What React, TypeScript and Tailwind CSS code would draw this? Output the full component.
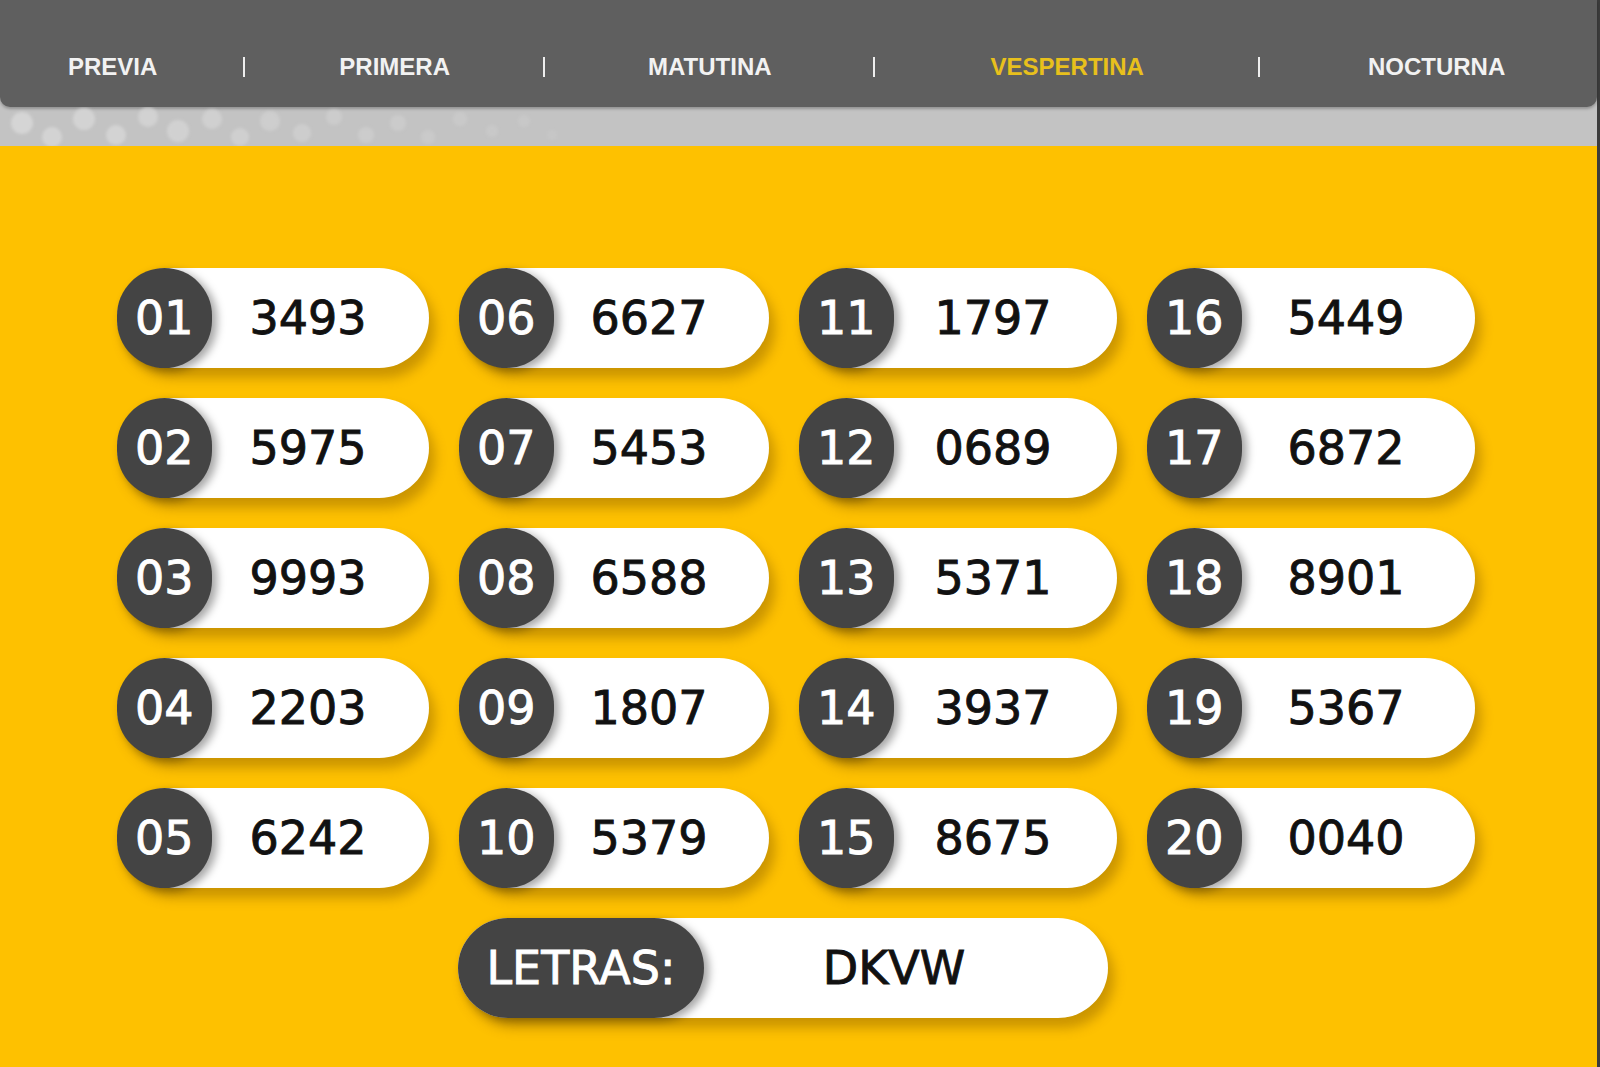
const navItems = ["PREVIA", "PRIMERA", "MATUTINA", "VESPERTINA", "NOCTURNA"];

const columns: [string, string][][] = [
  [["01", "3493"], ["02", "5975"], ["03", "9993"], ["04", "2203"], ["05", "6242"]],
  [["06", "6627"], ["07", "5453"], ["08", "6588"], ["09", "1807"], ["10", "5379"]],
  [["11", "1797"], ["12", "0689"], ["13", "5371"], ["14", "3937"], ["15", "8675"]],
  [["16", "5449"], ["17", "6872"], ["18", "8901"], ["19", "5367"], ["20", "0040"]],
];

// soft bokeh dots on the grey strip
const dots = [
  [22, 16, 11], [52, 30, 10], [84, 12, 11], [116, 28, 10], [148, 10, 10], [178, 24, 11],
  [212, 12, 10], [240, 30, 9], [270, 14, 10], [302, 26, 9], [334, 10, 8], [366, 28, 8],
  [398, 16, 8], [428, 30, 7], [460, 12, 7], [492, 24, 6], [524, 14, 6], [552, 28, 5],
];

function Pill({ num, value }: { num: string; value: string }) {
  return (
    <div className="relative flex h-[100px] items-center justify-center rounded-full bg-white pl-[70px] shadow-[6px_10px_12px_rgba(110,70,0,0.35)]">
      <div className="absolute left-0 top-0 flex h-full min-w-[86px] items-center justify-center rounded-full bg-[#444444] px-[18px] text-white shadow-[5px_3px_8px_rgba(0,0,0,0.35)] [-webkit-text-stroke:0.9px_#fff]">
        {num}
      </div>
      <span className="text-[#111] [-webkit-text-stroke:0.9px_#111]">{value}</span>
    </div>
  );
}

export default function App() {
  return (
    <div className="h-[1067px] w-[1600px] overflow-hidden bg-[#3c3c3c] font-['DejaVu_Sans',sans-serif]">
      <div className="w-[1597px] bg-[#c3c3c3]">
        <nav className="flex h-[107px] items-center rounded-b-[10px] bg-[#5f5f5f] pl-[68px] pt-[26px] font-['Liberation_Sans',Arial,sans-serif] text-[24px] font-bold text-[#f2f2f2] shadow-[0_2px_3px_rgba(0,0,0,0.25)]">
          <span>{navItems[0]}</span>
          <div className="ml-[86px] h-[20px] w-[2px] bg-[#eee]" />
          <span className="ml-[94px]">{navItems[1]}</span>
          <div className="ml-[93px] h-[20px] w-[2px] bg-[#eee]" />
          <span className="ml-[103px]">{navItems[2]}</span>
          <div className="ml-[101px] h-[20px] w-[2px] bg-[#eee]" />
          <span className="ml-[116px] text-[#e8c01c]">{navItems[3]}</span>
          <div className="ml-[114px] h-[20px] w-[2px] bg-[#eee]" />
          <span className="ml-[108px]">{navItems[4]}</span>
        </nav>
        <div className="h-[39px]">
          <svg width="600" height="39" viewBox="0 0 600 39">
            <defs>
              <filter id="blur">
                <feGaussianBlur stdDeviation="1.5" />
              </filter>
            </defs>
            <g filter="url(#blur)">
              {dots.map(([x, y, r], i) => (
                <circle key={i} cx={x} cy={y} r={r} fill="#d8d8d8" opacity={0.85 - i * 0.04} />
              ))}
            </g>
          </svg>
        </div>
      </div>
      <main className="h-[921px] w-[1597px] bg-[#fec100] pl-[117px] pt-[122px] text-[46px] leading-none">
        <div className="grid grid-cols-[312px_310px_318px_328px] gap-x-[30px]">
          {columns.map((col, ci) => (
            <div key={ci} className="flex flex-col gap-[30px]">
              {col.map(([n, v]) => (
                <Pill key={n} num={n} value={v} />
              ))}
            </div>
          ))}
        </div>
        <div className="ml-[341px] mt-[30px] w-[650px]">
          <div className="relative flex h-[100px] items-center justify-center rounded-full bg-white pl-[222px] shadow-[6px_10px_12px_rgba(110,70,0,0.35)]">
            <div className="absolute left-0 top-0 flex h-full w-[246px] items-center justify-center rounded-full bg-[#444444] text-white shadow-[5px_3px_8px_rgba(0,0,0,0.35)] [-webkit-text-stroke:0.9px_#fff]">
              LETRAS:
            </div>
            <span className="text-[#111] [-webkit-text-stroke:0.9px_#111]">DKVW</span>
          </div>
        </div>
      </main>
    </div>
  );
}
